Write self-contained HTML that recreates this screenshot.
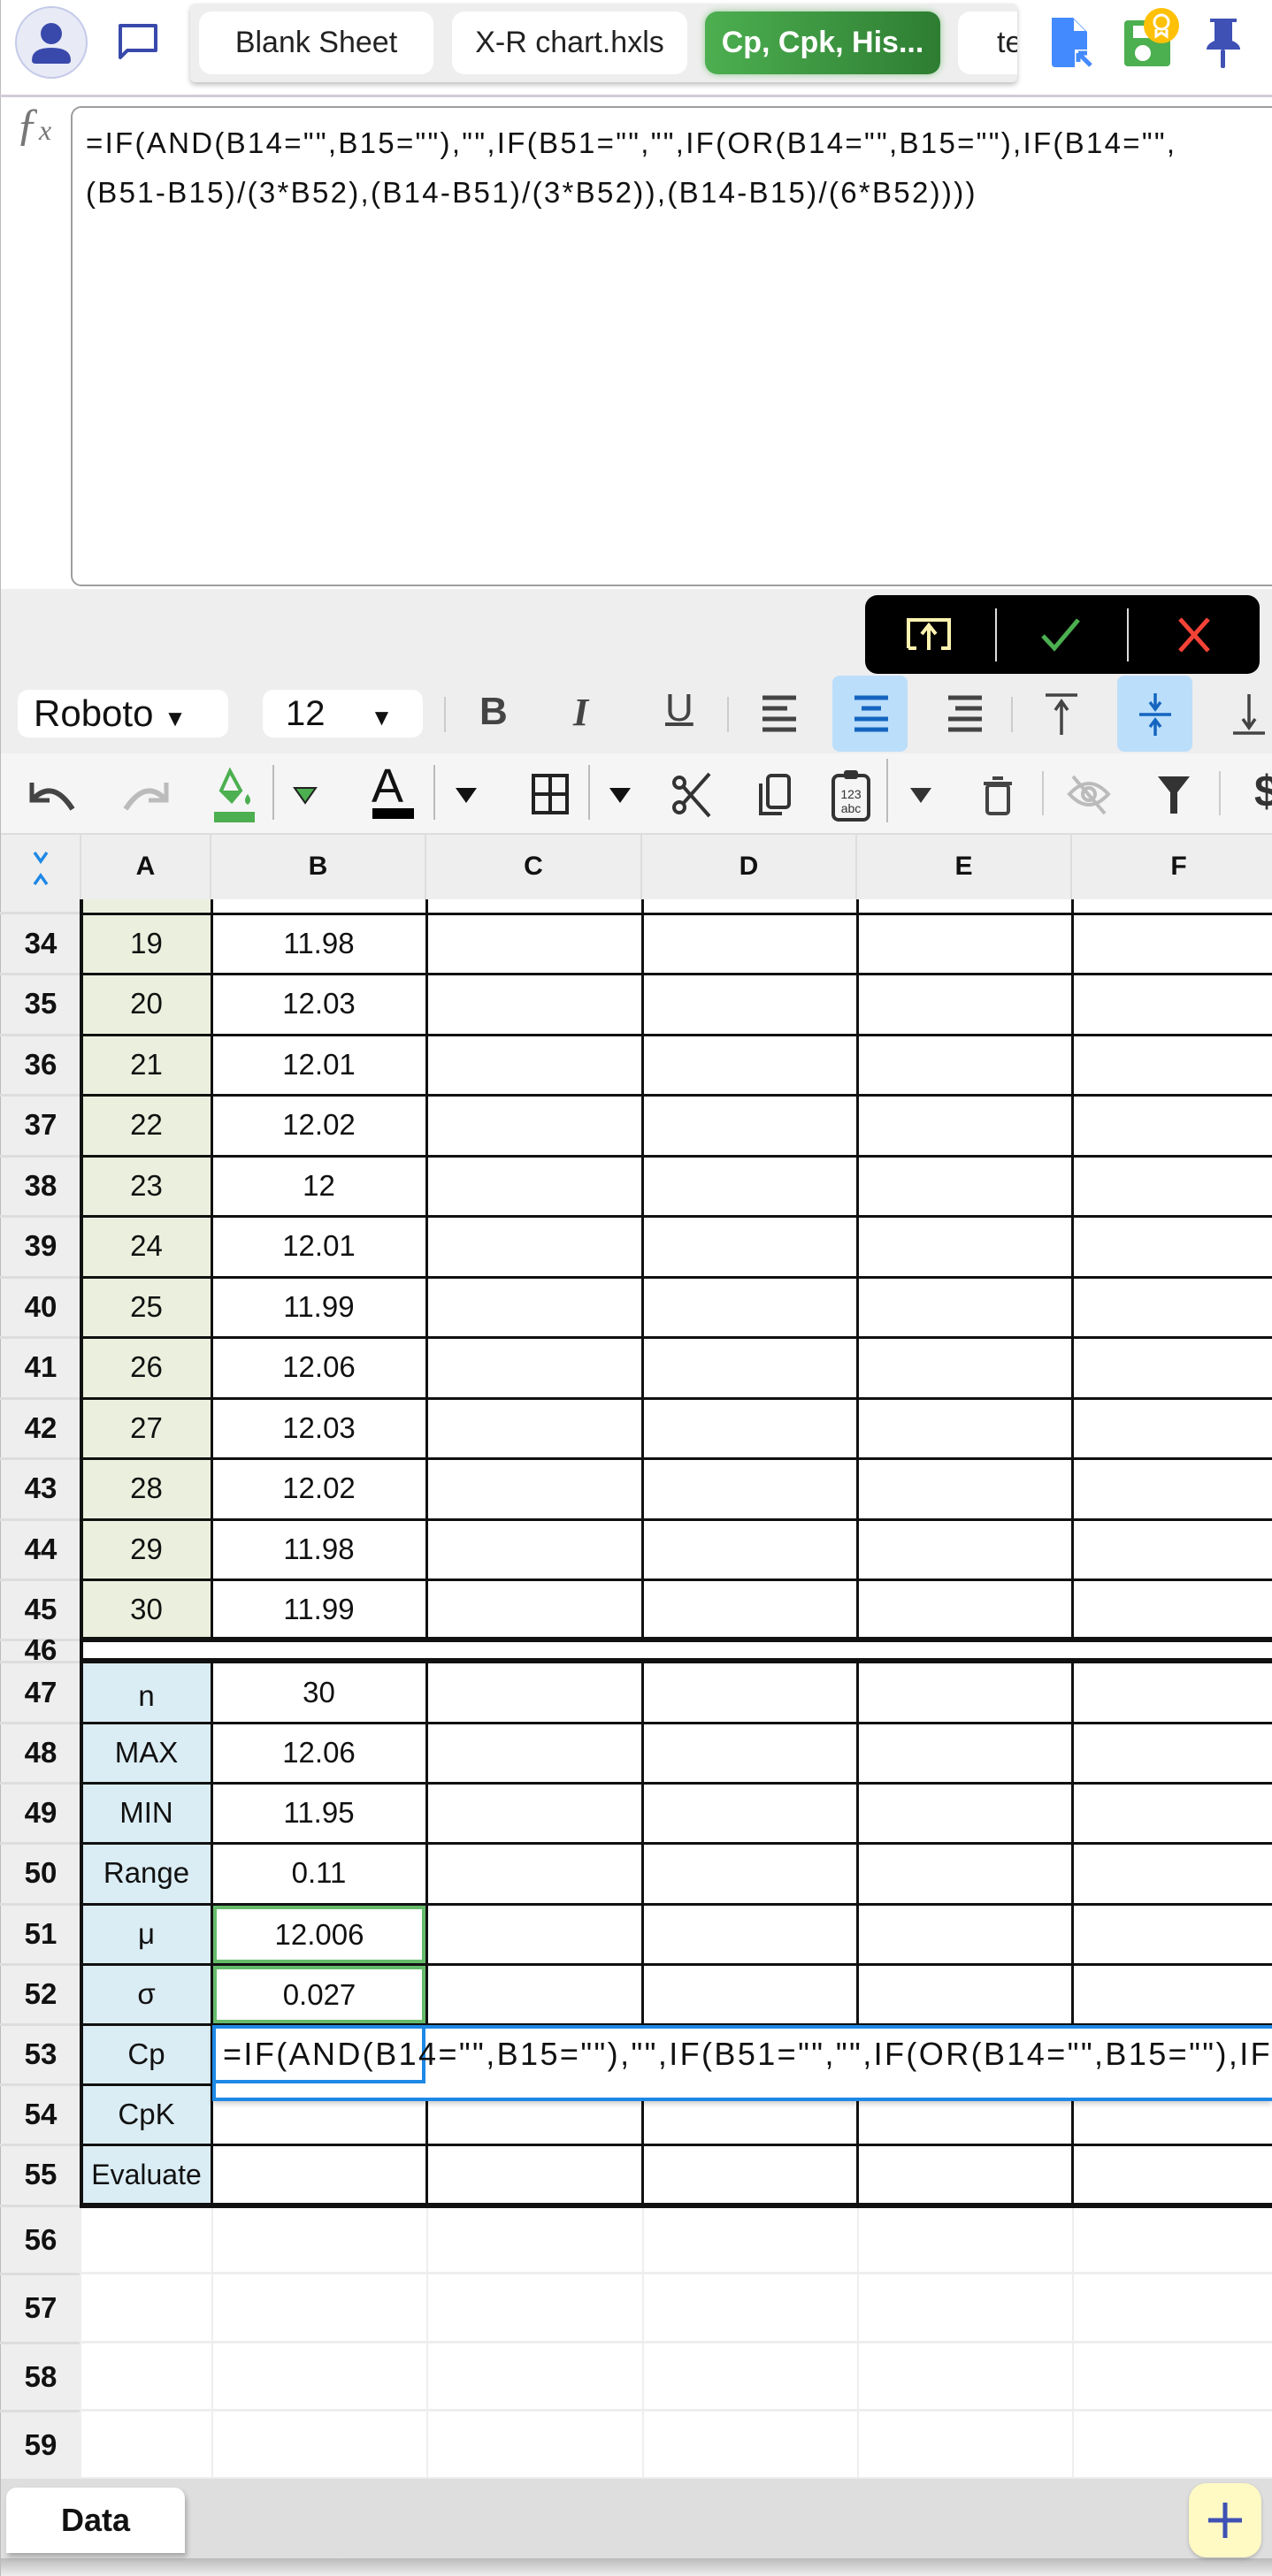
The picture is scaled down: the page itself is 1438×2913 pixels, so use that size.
<!DOCTYPE html>
<html><head><meta charset="utf-8">
<style>
*{box-sizing:border-box;margin:0;padding:0}
body{width:1438px;height:2913px;position:relative;overflow:hidden;background:#fff;font-family:"Liberation Sans",Arial,sans-serif;color:#111}
.a{position:absolute}
.tab{position:absolute;top:13px;height:71px;border-radius:14px;background:#fff;font-size:34px;line-height:71px;text-align:center;color:#222;white-space:nowrap;overflow:hidden}
.rn{position:absolute;left:0;width:92px;text-align:center;font-weight:bold;font-size:33px;color:#111}
.ct{position:absolute;text-align:center;font-size:33px;color:#111}
.hl{position:absolute;height:3px;background:#111}
.vl{position:absolute;width:3px;background:#111}
.ch{position:absolute;top:942px;height:75px;line-height:75px;text-align:center;font-weight:bold;font-size:30px;border-right:2px solid #ddd}
</style></head><body>

<div class="a" style="left:0;top:0;width:1px;height:2913px;background:#bbb"></div>
<svg class="a" style="left:16px;top:6px" width="84" height="84" viewBox="0 0 84 84">
<circle cx="42" cy="42" r="40" fill="#e8eaf6" stroke="#c5cae9" stroke-width="2"/>
<circle cx="42" cy="32" r="12" fill="#3949ab"/>
<path d="M20 62 Q20 48 42 48 Q64 48 64 62 Q64 66 60 66 L24 66 Q20 66 20 62Z" fill="#3949ab"/>
</svg>
<svg class="a" style="left:132px;top:25px" width="48" height="44" viewBox="0 0 48 44">
<path d="M4 4 H44 V32 H12 L4 40 Z" fill="none" stroke="#3949ab" stroke-width="4" stroke-linejoin="round"/>
</svg>
<div class="a" style="left:215px;top:4px;width:935px;height:89px;background:#eee;border-radius:6px;box-shadow:0 3px 6px rgba(0,0,0,.25)"></div>
<div class="tab" style="left:225px;width:265px">Blank Sheet</div>
<div class="tab" style="left:511px;width:266px">X-R chart.hxls</div>
<div class="tab" style="left:797px;width:266px;background:linear-gradient(90deg,#4caf50,#2e7d32);color:#fff;font-weight:bold;box-shadow:0 0 8px rgba(76,175,80,.6)">Cp, Cpk, His...</div>
<div class="tab" style="left:1083px;width:67px;border-radius:14px 0 0 14px;text-align:left;padding-left:44px">te</div>
<svg class="a" style="left:1185px;top:18px" width="52" height="62" viewBox="0 0 52 62">
<path d="M4 2 H28 L44 18 V38 H30 V58 H8 Q4 58 4 54 Z" fill="#448aff"/>
<path d="M29 4 V17 H42 Z" fill="#fff"/>
<path d="M34 42 L34 52 M34 42 L44 42 M34 42 L48 56" stroke="#448aff" stroke-width="5" fill="none"/>
</svg>
<svg class="a" style="left:1268px;top:8px" width="70" height="70" viewBox="0 0 70 70">
<rect x="3" y="15" width="52" height="52" rx="4" fill="#4caf50"/>
<rect x="13" y="21" width="20" height="14" fill="#fff"/>
<circle cx="24" cy="52" r="9" fill="#fff"/>
<circle cx="45" cy="21" r="20" fill="#ffc107"/>
<circle cx="45" cy="17" r="8" fill="none" stroke="#fff" stroke-width="3"/>
<path d="M39 25 V33 L45 29 L51 33 V25" fill="none" stroke="#fff" stroke-width="3"/>
</svg>
<svg class="a" style="left:1360px;top:18px" width="46" height="62" viewBox="0 0 46 62">
<path d="M8 3 H38 V7 H33 V28 Q42 32 42 38 H4 Q4 32 13 28 V7 H8 Z" fill="#3f51b5"/>
<rect x="20" y="38" width="5" height="21" rx="2" fill="#3f51b5"/>
</svg>
<div class="a" style="left:0;top:107px;width:1438px;height:3px;background:#d3ccd6"></div>

<div class="a" style="left:18px;top:112px;font-family:'Liberation Serif',serif;font-style:italic;font-size:52px;color:#777">&#402;<span style="font-size:32px">x</span></div>
<div class="a" style="left:80px;top:120px;width:1370px;height:543px;border:2px solid #9e9e9e;border-radius:12px;background:#fff"></div>
<div class="a" style="left:97px;top:134px;width:1340px;font-size:33px;line-height:56px;letter-spacing:2.3px;color:#111;white-space:nowrap">=IF(AND(B14="",B15=""),"",IF(B51="","",IF(OR(B14="",B15=""),IF(B14="",<br>(B51-B15)/(3*B52),(B14-B51)/(3*B52)),(B14-B15)/(6*B52))))</div>

<div class="a" style="left:1px;top:666px;width:1437px;height:186px;background:#eee"></div>
<div class="a" style="left:978px;top:673px;width:446px;height:89px;background:#000;border-radius:14px"></div>
<svg class="a" style="left:1020px;top:695px" width="60" height="46" viewBox="0 0 60 46">
<path d="M7 38 V6 H53 V38 H44 M16 38 H7" fill="none" stroke="#fff3b0" stroke-width="4"/>
<path d="M30 40 V14 M22 22 L30 12 L38 22" fill="none" stroke="#fff3b0" stroke-width="4"/>
</svg>
<div class="a" style="left:1125px;top:688px;width:2px;height:60px;background:#ddd"></div>
<svg class="a" style="left:1175px;top:695px" width="50" height="46" viewBox="0 0 50 46"><path d="M4 24 L17 38 L44 6" fill="none" stroke="#4caf50" stroke-width="5"/></svg>
<div class="a" style="left:1274px;top:688px;width:2px;height:60px;background:#ddd"></div>
<svg class="a" style="left:1328px;top:698px" width="44" height="40" viewBox="0 0 44 40"><path d="M6 2 L38 38 M38 2 L6 38" stroke="#f44336" stroke-width="5"/></svg>

<div class="a" style="left:20px;top:780px;width:238px;height:54px;background:#fff;border-radius:12px;font-size:42px;line-height:54px;padding-left:18px;white-space:nowrap">Roboto <span style="font-size:26px">&#9660;</span></div>
<div class="a" style="left:297px;top:780px;width:181px;height:54px;background:#fff;border-radius:12px;font-size:40px;line-height:54px;padding-left:26px;white-space:nowrap">12 <span style="font-size:26px;margin-left:40px">&#9660;</span></div>
<div class="a" style="left:502px;top:788px;width:2px;height:40px;background:#ccc"></div>
<div class="a" style="left:542px;top:780px;font-size:44px;font-weight:bold;color:#444">B</div>
<div class="a" style="left:648px;top:780px;font-size:44px;font-weight:bold;font-style:italic;font-family:'Liberation Serif',serif;color:#444">I</div>
<div class="a" style="left:752px;top:776px;font-size:44px;color:#444;text-decoration:underline;text-decoration-thickness:4px">U</div>
<div class="a" style="left:822px;top:788px;width:2px;height:40px;background:#ccc"></div>
<div class="a" style="left:941px;top:764px;width:85px;height:86px;background:#bbdefb;border-radius:8px"></div>
<div class="a" style="left:1263px;top:764px;width:85px;height:86px;background:#bbdefb;border-radius:8px"></div>
<svg class="a" style="left:858px;top:785px" width="60" height="44" viewBox="0 0 60 44"><path d="M4 4 H42 M4 16 H32 M4 28 H42 M4 40 H42" stroke="#444" stroke-width="5"/></svg>
<svg class="a" style="left:962px;top:785px" width="50" height="44" viewBox="0 0 50 44"><path d="M4 4 H42 M12 16 H34 M4 28 H42 M4 40 H42" stroke="#1565c0" stroke-width="5"/></svg>
<svg class="a" style="left:1068px;top:785px" width="50" height="44" viewBox="0 0 50 44"><path d="M4 4 H42 M12 16 H42 M4 28 H42 M4 40 H42" stroke="#444" stroke-width="5"/></svg>
<div class="a" style="left:1143px;top:788px;width:2px;height:40px;background:#ccc"></div>
<svg class="a" style="left:1180px;top:783px" width="40" height="50" viewBox="0 0 40 50"><path d="M2 3 H38 M20 48 V12 M13 20 L20 10 L27 20" stroke="#444" stroke-width="3.5" fill="none"/></svg>
<svg class="a" style="left:1286px;top:782px" width="40" height="52" viewBox="0 0 40 52"><path d="M2 26 H38 M20 2 V18 M14 12 L20 20 L26 12 M20 50 V34 M14 40 L20 32 L26 40" stroke="#1565c0" stroke-width="3.5" fill="none"/></svg>
<svg class="a" style="left:1392px;top:783px" width="40" height="50" viewBox="0 0 40 50"><path d="M2 46 H38 M20 2 V38 M13 30 L20 40 L27 30" stroke="#444" stroke-width="3.5" fill="none"/></svg>

<div class="a" style="left:1px;top:852px;width:1437px;height:90px;background:#f5f5f5"></div>
<svg class="a" style="left:30px;top:875px" width="60" height="46" viewBox="0 0 60 46"><path d="M6 10 V30 H26" fill="none" stroke="#444" stroke-width="5"/><path d="M8 28 Q30 6 52 40" fill="none" stroke="#444" stroke-width="6"/></svg>
<svg class="a" style="left:134px;top:875px" width="60" height="46" viewBox="0 0 60 46"><path d="M54 10 V30 H34" fill="none" stroke="#bbb" stroke-width="5"/><path d="M52 28 Q30 6 8 40" fill="none" stroke="#bbb" stroke-width="6"/></svg>
<svg class="a" style="left:238px;top:868px" width="56" height="64" viewBox="0 0 56 64"><path d="M22 4 L34 26 L24 38 L12 26 Z" fill="none" stroke="#4caf50" stroke-width="4"/><path d="M12 26 L36 26 L24 38 Z" fill="#4caf50"/><path d="M42 30 Q48 38 42 42 Q36 38 42 30Z" fill="#4caf50"/><rect x="4" y="50" width="46" height="12" fill="#4caf50"/></svg>
<div class="a" style="left:308px;top:865px;width:2px;height:62px;background:#bbb"></div>
<svg class="a" style="left:330px;top:888px" width="30" height="22" viewBox="0 0 30 22"><path d="M3 3 H27 L15 20 Z" fill="#4caf50" stroke="#222" stroke-width="2"/></svg>
<div class="a" style="left:420px;top:862px;font-size:54px;line-height:54px;color:#111">A</div>
<div class="a" style="left:421px;top:914px;width:47px;height:12px;background:#000"></div>
<div class="a" style="left:490px;top:865px;width:2px;height:62px;background:#bbb"></div>
<svg class="a" style="left:512px;top:888px" width="30" height="22" viewBox="0 0 30 22"><path d="M3 3 H27 L15 20 Z" fill="#111"/></svg>
<svg class="a" style="left:600px;top:874px" width="44" height="48" viewBox="0 0 44 48"><rect x="3" y="3" width="38" height="42" fill="none" stroke="#222" stroke-width="4"/><path d="M22 3 V45 M3 24 H41" stroke="#222" stroke-width="4"/></svg>
<div class="a" style="left:665px;top:865px;width:2px;height:62px;background:#bbb"></div>
<svg class="a" style="left:686px;top:888px" width="30" height="22" viewBox="0 0 30 22"><path d="M3 3 H27 L15 20 Z" fill="#111"/></svg>
<svg class="a" style="left:758px;top:873px" width="50" height="52" viewBox="0 0 50 52"><circle cx="10" cy="40" r="6" fill="none" stroke="#333" stroke-width="4"/><circle cx="10" cy="12" r="6" fill="none" stroke="#333" stroke-width="4"/><path d="M14 16 L44 50 M14 36 L44 2" stroke="#333" stroke-width="4"/></svg>
<svg class="a" style="left:854px;top:874px" width="44" height="52" viewBox="0 0 44 52"><rect x="14" y="3" width="24" height="36" rx="4" fill="none" stroke="#333" stroke-width="4"/><path d="M6 12 V46 H30" fill="none" stroke="#333" stroke-width="4"/></svg>
<svg class="a" style="left:938px;top:867px" width="50" height="64" viewBox="0 0 50 64"><rect x="4" y="10" width="40" height="50" rx="6" fill="none" stroke="#333" stroke-width="4"/><rect x="16" y="4" width="16" height="10" rx="3" fill="#333"/><text x="24" y="36" font-size="14" text-anchor="middle" fill="#333" font-family="Liberation Sans">123</text><text x="24" y="52" font-size="14" text-anchor="middle" fill="#333" font-family="Liberation Sans">abc</text></svg>
<div class="a" style="left:1002px;top:858px;width:2px;height:72px;background:#bbb"></div>
<svg class="a" style="left:1026px;top:888px" width="30" height="22" viewBox="0 0 30 22"><path d="M3 3 H27 L15 20 Z" fill="#333"/></svg>
<svg class="a" style="left:1108px;top:876px" width="40" height="48" viewBox="0 0 40 48"><rect x="8" y="12" width="24" height="32" rx="3" fill="none" stroke="#444" stroke-width="4"/><path d="M4 10 H36 M14 4 H26" stroke="#444" stroke-width="4"/></svg>
<div class="a" style="left:1178px;top:872px;width:2px;height:50px;background:#ccc"></div>
<svg class="a" style="left:1205px;top:872px" width="52" height="52" viewBox="0 0 52 52"><path d="M4 26 Q26 2 48 26 Q26 50 4 26Z" fill="none" stroke="#bbb" stroke-width="4"/><circle cx="26" cy="26" r="7" fill="none" stroke="#bbb" stroke-width="4"/><path d="M8 6 L44 48" stroke="#bbb" stroke-width="4"/></svg>
<svg class="a" style="left:1306px;top:874px" width="42" height="48" viewBox="0 0 42 48"><path d="M3 4 H39 L25 22 V46 H17 V22 Z" fill="#333"/></svg>
<div class="a" style="left:1378px;top:872px;width:2px;height:50px;background:#ccc"></div>
<div class="a" style="left:1418px;top:866px;font-size:50px;font-weight:bold;color:#333">$</div>

<div class="a" style="left:1px;top:942px;width:1437px;height:75px;background:#eee;border-top:2px solid #ddd"></div>
<svg class="a" style="left:34px;top:960px" width="24" height="48" viewBox="0 0 24 48"><path d="M5 4 L12 14 L19 4 M5 40 L12 30 L19 40" fill="none" stroke="#1e88e5" stroke-width="3.5"/></svg>
<div class="ch" style="left:0;width:92px"></div>
<div class="ch" style="left:92px;width:147px">A</div>
<div class="ch" style="left:239px;width:243px">B</div>
<div class="ch" style="left:482px;width:244px">C</div>
<div class="ch" style="left:726px;width:243px">D</div>
<div class="ch" style="left:969px;width:243px">E</div>
<div class="ch" style="left:1212px;width:243px">F</div>

<div class="a" style="left:1px;top:1017px;width:91px;height:1786px;background:#eee"></div>
<div class="a" style="left:92px;top:1017px;width:147px;height:837px;background:#ebf0de"></div>
<div class="a" style="left:92px;top:1880px;width:147px;height:614px;background:#dbedf4"></div>
<div class="a" style="left:0;top:1031px;width:90px;height:3px;background:#ddd"></div>

<div class="hl" style="left:90px;top:1032px;width:1348px"></div>
<div class="hl" style="left:90px;top:1100px;width:1348px"></div>
<div class="hl" style="left:90px;top:1169px;width:1348px"></div>
<div class="hl" style="left:90px;top:1237px;width:1348px"></div>
<div class="hl" style="left:90px;top:1306px;width:1348px"></div>
<div class="hl" style="left:90px;top:1374px;width:1348px"></div>
<div class="hl" style="left:90px;top:1443px;width:1348px"></div>
<div class="hl" style="left:90px;top:1511px;width:1348px"></div>
<div class="hl" style="left:90px;top:1580px;width:1348px"></div>
<div class="hl" style="left:90px;top:1648px;width:1348px"></div>
<div class="hl" style="left:90px;top:1717px;width:1348px"></div>
<div class="hl" style="left:90px;top:1785px;width:1348px"></div>
<div class="hl" style="left:90px;top:1851px;width:1348px;height:6px"></div>
<div class="hl" style="left:90px;top:1875px;width:1348px;height:6px"></div>
<div class="hl" style="left:90px;top:1947px;width:1348px"></div>
<div class="hl" style="left:90px;top:2015px;width:1348px"></div>
<div class="hl" style="left:90px;top:2083px;width:1348px"></div>
<div class="hl" style="left:90px;top:2152px;width:1348px"></div>
<div class="hl" style="left:90px;top:2220px;width:1348px"></div>
<div class="hl" style="left:90px;top:2288px;width:1348px"></div>
<div class="hl" style="left:90px;top:2356px;width:1348px"></div>
<div class="hl" style="left:90px;top:2424px;width:1348px"></div>
<div class="hl" style="left:90px;top:2491px;width:1348px;height:6px"></div>
<div class="a" style="left:0;top:1100px;width:90px;height:3px;background:#ddd;box-shadow:0 69px 0 #ddd,0 137px 0 #ddd,0 206px 0 #ddd,0 274px 0 #ddd,0 343px 0 #ddd,0 411px 0 #ddd,0 480px 0 #ddd,0 548px 0 #ddd,0 617px 0 #ddd,0 685px 0 #ddd,0 753px 0 #ddd,0 778px 0 #ddd,0 847px 0 #ddd,0 915px 0 #ddd,0 983px 0 #ddd,0 1052px 0 #ddd,0 1120px 0 #ddd,0 1188px 0 #ddd,0 1256px 0 #ddd,0 1324px 0 #ddd,0 1393px 0 #ddd,0 1470px 0 #ddd,0 1548px 0 #ddd,0 1625px 0 #ddd"></div>
<div class="vl" style="left:90px;top:1017px;height:1480px;width:4px"></div>
<div class="vl" style="left:238px;top:1017px;height:1480px"></div>
<div class="vl" style="left:481px;top:1017px;height:1480px"></div>
<div class="vl" style="left:725px;top:1017px;height:1480px"></div>
<div class="vl" style="left:968px;top:1017px;height:1480px"></div>
<div class="vl" style="left:1211px;top:1017px;height:1480px"></div>
<div class="a" style="left:94px;top:1857px;width:1344px;height:18px;background:#fff"></div>
<div class="a" style="left:92px;top:2569px;width:1346px;height:3px;background:#eee;box-shadow:0 78px 0 #eee,0 155px 0 #eee,0 232px 0 #eee"></div>
<div class="a" style="left:239px;top:2497px;width:2px;height:306px;background:#eee;box-shadow:243px 0 0 #eee,487px 0 0 #eee,730px 0 0 #eee,973px 0 0 #eee"></div>

<div class="rn" style="top:1033px;line-height:68px">34</div><div class="ct" style="left:92px;width:147px;top:1033px;line-height:68px">19</div><div class="ct" style="left:239px;width:243px;top:1033px;line-height:68px">11.98</div>
<div class="rn" style="top:1101px;line-height:68px">35</div><div class="ct" style="left:92px;width:147px;top:1101px;line-height:68px">20</div><div class="ct" style="left:239px;width:243px;top:1101px;line-height:68px">12.03</div>
<div class="rn" style="top:1170px;line-height:68px">36</div><div class="ct" style="left:92px;width:147px;top:1170px;line-height:68px">21</div><div class="ct" style="left:239px;width:243px;top:1170px;line-height:68px">12.01</div>
<div class="rn" style="top:1238px;line-height:68px">37</div><div class="ct" style="left:92px;width:147px;top:1238px;line-height:68px">22</div><div class="ct" style="left:239px;width:243px;top:1238px;line-height:68px">12.02</div>
<div class="rn" style="top:1307px;line-height:68px">38</div><div class="ct" style="left:92px;width:147px;top:1307px;line-height:68px">23</div><div class="ct" style="left:239px;width:243px;top:1307px;line-height:68px">12</div>
<div class="rn" style="top:1375px;line-height:68px">39</div><div class="ct" style="left:92px;width:147px;top:1375px;line-height:68px">24</div><div class="ct" style="left:239px;width:243px;top:1375px;line-height:68px">12.01</div>
<div class="rn" style="top:1444px;line-height:68px">40</div><div class="ct" style="left:92px;width:147px;top:1444px;line-height:68px">25</div><div class="ct" style="left:239px;width:243px;top:1444px;line-height:68px">11.99</div>
<div class="rn" style="top:1512px;line-height:68px">41</div><div class="ct" style="left:92px;width:147px;top:1512px;line-height:68px">26</div><div class="ct" style="left:239px;width:243px;top:1512px;line-height:68px">12.06</div>
<div class="rn" style="top:1581px;line-height:68px">42</div><div class="ct" style="left:92px;width:147px;top:1581px;line-height:68px">27</div><div class="ct" style="left:239px;width:243px;top:1581px;line-height:68px">12.03</div>
<div class="rn" style="top:1649px;line-height:68px">43</div><div class="ct" style="left:92px;width:147px;top:1649px;line-height:68px">28</div><div class="ct" style="left:239px;width:243px;top:1649px;line-height:68px">12.02</div>
<div class="rn" style="top:1718px;line-height:68px">44</div><div class="ct" style="left:92px;width:147px;top:1718px;line-height:68px">29</div><div class="ct" style="left:239px;width:243px;top:1718px;line-height:68px">11.98</div>
<div class="rn" style="top:1786px;line-height:68px">45</div><div class="ct" style="left:92px;width:147px;top:1786px;line-height:68px">30</div><div class="ct" style="left:239px;width:243px;top:1786px;line-height:68px">11.99</div>
<div class="rn" style="top:1848px;line-height:36px;height:30px;overflow:hidden">46</div>
<div class="rn" style="top:1880px;line-height:68px">47</div><div class="ct" style="left:92px;width:147px;top:1884px;line-height:68px">n</div><div class="ct" style="left:239px;width:243px;top:1880px;line-height:68px">30</div>
<div class="rn" style="top:1948px;line-height:68px">48</div><div class="ct" style="left:92px;width:147px;top:1948px;line-height:68px">MAX</div><div class="ct" style="left:239px;width:243px;top:1948px;line-height:68px">12.06</div>
<div class="rn" style="top:2016px;line-height:68px">49</div><div class="ct" style="left:92px;width:147px;top:2016px;line-height:68px">MIN</div><div class="ct" style="left:239px;width:243px;top:2016px;line-height:68px">11.95</div>
<div class="rn" style="top:2084px;line-height:68px">50</div><div class="ct" style="left:92px;width:147px;top:2084px;line-height:68px">Range</div><div class="ct" style="left:239px;width:243px;top:2084px;line-height:68px">0.11</div>
<div class="rn" style="top:2153px;line-height:68px">51</div><div class="ct" style="left:92px;width:147px;top:2153px;line-height:68px">μ</div>
<div class="rn" style="top:2221px;line-height:68px">52</div><div class="ct" style="left:92px;width:147px;top:2221px;line-height:68px">σ</div>
<div class="a" style="left:241px;top:2155px;width:240px;height:65px;border:4px solid #66bb6a;background:#fff;text-align:center;font-size:33px;line-height:57px">12.006</div>
<div class="a" style="left:241px;top:2223px;width:240px;height:65px;border:4px solid #66bb6a;background:#fff;text-align:center;font-size:33px;line-height:57px">0.027</div>
<div class="rn" style="top:2289px;line-height:68px">53</div><div class="ct" style="left:92px;width:147px;top:2289px;line-height:68px">Cp</div>
<div class="rn" style="top:2357px;line-height:68px">54</div><div class="ct" style="left:92px;width:147px;top:2357px;line-height:68px">CpK</div>
<div class="rn" style="top:2425px;line-height:68px">55</div><div class="ct" style="left:92px;width:147px;top:2425px;line-height:68px;font-size:32px">Evaluate</div>
<div class="a" style="left:240px;top:2290px;width:1198px;height:86px;background:#fff;border:4px solid #1e88e5;border-right:none;box-shadow:0 3px 6px rgba(0,0,0,.2)"></div>
<div class="a" style="left:240px;top:2290px;width:241px;height:66px;border:4px solid #1e88e5"></div>
<div class="a" style="left:252px;top:2292px;width:1186px;overflow:hidden;white-space:nowrap;font-size:36px;line-height:62px;letter-spacing:2.4px">=IF(AND(B14="",B15=""),"",IF(B51="","",IF(OR(B14="",B15=""),IF(B14="",</div>

<div class="rn" style="top:2494px;line-height:77px">56</div>
<div class="rn" style="top:2571px;line-height:77px">57</div>
<div class="rn" style="top:2649px;line-height:77px">58</div>
<div class="rn" style="top:2726px;line-height:77px">59</div>

<div class="a" style="left:1px;top:2803px;width:1437px;height:92px;background:#dedede"></div>
<div class="a" style="left:1px;top:2893px;width:1437px;height:20px;background:linear-gradient(#bbb,#eee)"></div>
<div class="a" style="left:7px;top:2813px;width:202px;height:74px;background:#fff;border-radius:12px 12px 0 0;box-shadow:2px 4px 6px rgba(0,0,0,.25);text-align:center;font-weight:bold;font-size:36px;line-height:74px">Data</div>
<div class="a" style="left:1344px;top:2808px;width:82px;height:84px;background:#fff9c4;border-radius:20px;box-shadow:0 2px 4px rgba(0,0,0,.2)"></div>
<svg class="a" style="left:1364px;top:2828px" width="42" height="44" viewBox="0 0 42 44"><path d="M21 2 V42 M2 22 H40" stroke="#3f51b5" stroke-width="5"/></svg>
</body></html>
